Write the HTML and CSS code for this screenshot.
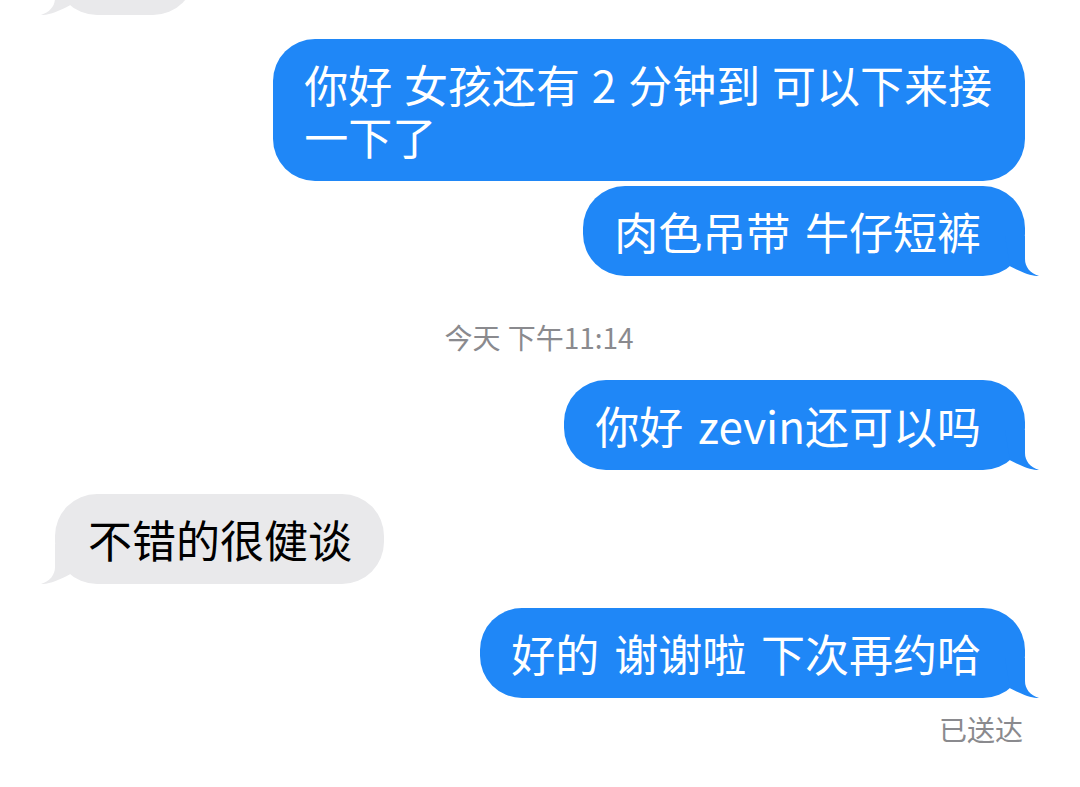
FILE: index.html
```html
<!DOCTYPE html>
<html lang="zh-CN">
<head>
<meta charset="utf-8">
<title>信息</title>
<link rel="stylesheet" href="styles.css">
</head>
<body>
<main class="chat">
  <div class="bubble in partial" aria-hidden="true">&nbsp;<svg class="tail" viewBox="0 0 56 40" aria-hidden="true"><path d="M20,0 H40 V23 C40,31 45,37 54,40 C47,40.5 36,36 25,30.2 Z"/></svg></div>
  <div class="bubble out wide">你好 女孩还有 2 分钟到 可以下来接<br>一下了</div>
  <div class="bubble out next">肉色吊带 牛仔短裤<svg class="tail" viewBox="0 0 56 40" aria-hidden="true"><path d="M20,0 H40 V23 C40,31 45,37 54,40 C47,40.5 36,36 25,30.2 Z"/></svg></div>
  <div class="stamp">今天 下午11:14</div>
  <div class="bubble out">你好 zevin还可以吗<svg class="tail" viewBox="0 0 56 40" aria-hidden="true"><path d="M20,0 H40 V23 C40,31 45,37 54,40 C47,40.5 36,36 25,30.2 Z"/></svg></div>
  <div class="bubble in">不错的很健谈<svg class="tail" viewBox="0 0 56 40" aria-hidden="true"><path d="M20,0 H40 V23 C40,31 45,37 54,40 C47,40.5 36,36 25,30.2 Z"/></svg></div>
  <div class="bubble out">好的 谢谢啦 下次再约哈<svg class="tail" viewBox="0 0 56 40" aria-hidden="true"><path d="M20,0 H40 V23 C40,31 45,37 54,40 C47,40.5 36,36 25,30.2 Z"/></svg></div>
  <div class="status">已送达</div>
</main>
</body>
</html>
```
FILE: styles.css
```css
:root {
  --blue: #1f87f7;
  --gray: #e9e9eb;
}
html, body {
  margin: 0;
  padding: 0;
  background: #ffffff;
}
body {
  font-family: "Noto Sans CJK SC", "Noto Sans", sans-serif;
  width: 1080px;
  height: 787px;
  overflow: hidden;
}
.chat {
  display: flex;
  flex-direction: column;
  padding: 0 55px;
}
.bubble {
  position: relative;
  font-size: 44px;
  line-height: 52px;
  word-spacing: 5px;
  border-radius: 42px;
  margin-top: 24px;
  white-space: nowrap;
}
.out {
  align-self: flex-end;
  background: var(--blue);
  color: #ffffff;
  fill: var(--blue);
  padding: 19px 44px 19px 31px;
}
.out.wide {
  padding-right: 33px;
  word-spacing: 2px;
}
.out.next {
  margin-top: 5px;
}
.in {
  align-self: flex-start;
  background: var(--gray);
  color: #000000;
  fill: var(--gray);
  padding: 19px 32px 19px 33px;
}
.in.partial {
  width: 75px;
  margin-top: -75px;
}
.tail {
  position: absolute;
  bottom: 0;
  width: 56px;
  height: 40px;
  display: block;
}
.out .tail {
  right: -16px;
}
.in .tail {
  left: -16px;
  transform: scaleX(-1);
}
.stamp {
  align-self: center;
  margin-top: 44px;
  font-size: 28px;
  line-height: 34px;
  color: #8a8a8e;
  margin-left: -2px;
  word-spacing: 1px;
}
.stamp + .bubble {
  margin-top: 26px;
}
.status {
  align-self: flex-end;
  margin-top: 14px;
  margin-right: 2px;
  font-size: 28px;
  line-height: 34px;
  color: #8a8a8e;
}
```
